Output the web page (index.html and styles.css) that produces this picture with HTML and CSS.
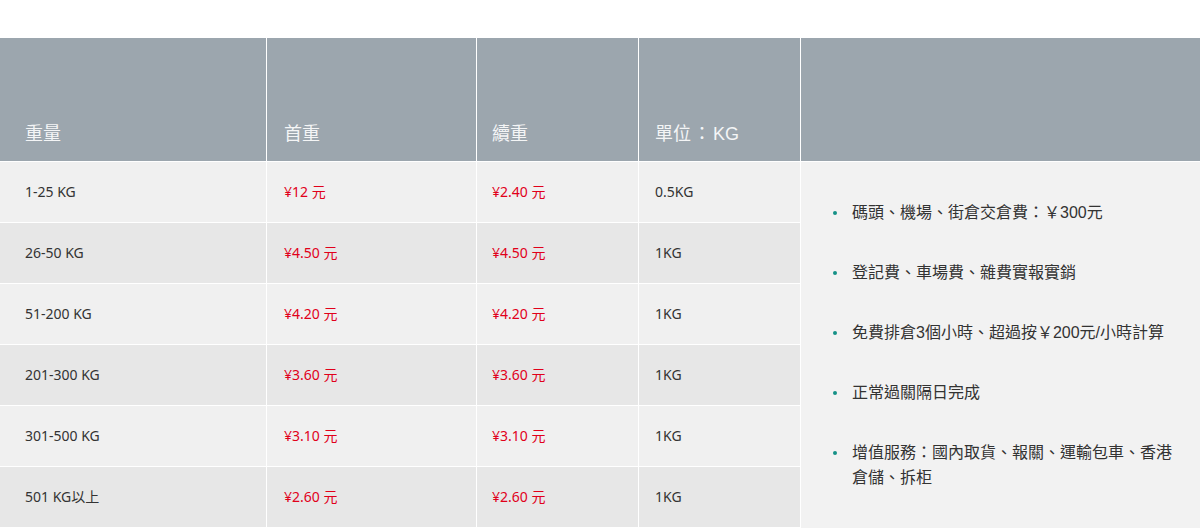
FILE: index.html
```html
<!DOCTYPE html>
<html lang="zh-Hant">
<head>
<meta charset="utf-8">
<title>收費標準</title>
<link rel="stylesheet" href="styles.css">
</head>
<body>
<div class="page">
  <div class="rates">
    <div class="hd c1">重量</div>
    <div class="hd c2">首重</div>
    <div class="hd c3">續重</div>
    <div class="hd c4">單位<span class="colon">：</span>KG</div>
    <div class="hd c5"></div>

    <div class="cell c1 odd">1-25 KG</div>
    <div class="cell c2 odd price">¥12 元</div>
    <div class="cell c3 odd price">¥2.40 元</div>
    <div class="cell c4 odd">0.5KG</div>

    <div class="notes">
      <ul class="note-list">
        <li>碼頭、機場、街倉交倉費：￥300元</li>
        <li>登記費、車場費、雜費實報實銷</li>
        <li>免費排倉3個小時、超過按￥200元/小時計算</li>
        <li>正常過關隔日完成</li>
        <li>增值服務：國內取貨、報關、運輸包車、香港倉儲、拆柜</li>
      </ul>
    </div>

    <div class="cell c1 even">26-50 KG</div>
    <div class="cell c2 even price">¥4.50 元</div>
    <div class="cell c3 even price">¥4.50 元</div>
    <div class="cell c4 even">1KG</div>

    <div class="cell c1 odd">51-200 KG</div>
    <div class="cell c2 odd price">¥4.20 元</div>
    <div class="cell c3 odd price">¥4.20 元</div>
    <div class="cell c4 odd">1KG</div>

    <div class="cell c1 even">201-300 KG</div>
    <div class="cell c2 even price">¥3.60 元</div>
    <div class="cell c3 even price">¥3.60 元</div>
    <div class="cell c4 even">1KG</div>

    <div class="cell c1 odd">301-500 KG</div>
    <div class="cell c2 odd price">¥3.10 元</div>
    <div class="cell c3 odd price">¥3.10 元</div>
    <div class="cell c4 odd">1KG</div>

    <div class="cell c1 even">501 KG以上</div>
    <div class="cell c2 even price">¥2.60 元</div>
    <div class="cell c3 even price">¥2.60 元</div>
    <div class="cell c4 even">1KG</div>
  </div>
</div>
</body>
</html>
```

FILE: styles.css
```css
html, body {
  margin: 0;
  padding: 0;
  background: #ffffff;
}

body {
  font-family: "Noto Sans", "Noto Sans CJK TC", sans-serif;
  color: #333333;
}

.page {
  padding-top: 38px;
  width: 1200px;
}

.rates {
  display: grid;
  grid-template-columns: 266px 209px 161px 161px 399px;
  grid-template-rows: 123px repeat(6, 60px);
  column-gap: 1px;
  row-gap: 1px;
  background: #ffffff;
  padding-bottom: 1px;
}

.hd {
  background: #9ca6ae;
  color: #f4f5f6;
  font-family: "Liberation Sans", "Noto Sans CJK TC", sans-serif;
  font-size: 18px;
  line-height: 24px;
  display: flex;
  align-items: flex-end;
  padding-bottom: 15px;
}

.colon {
  margin: 0 2px 0 2px;
}

.cell {
  display: flex;
  align-items: center;
  font-size: 14px;
  line-height: 20px;
  padding-bottom: 1px;
}

.c1 { padding-left: 25px; }
.c2 { padding-left: 17px; }
.c3 { padding-left: 15px; }
.c4 { padding-left: 16px; }

.odd { background: #f0f0f0; }
.even { background: #e7e7e7; }

.price {
  color: #e1001a;
}

.notes {
  grid-column: 5;
  grid-row: 2 / span 6;
  background: #f2f2f2;
  display: flex;
  align-items: center;
  margin-bottom: -1px;
}

.note-list {
  list-style: none;
  margin: 0;
  padding: 0 22px 0 51px;
  font-family: "Liberation Sans", "Noto Sans CJK TC", sans-serif;
  font-size: 16px;
  line-height: 25px;
  color: #333333;
}

.note-list li {
  position: relative;
  margin-bottom: 35px;
}

.note-list li:last-child {
  margin-bottom: 0;
}

.note-list li::before {
  content: "";
  position: absolute;
  left: -19px;
  top: 11px;
  width: 4px;
  height: 4px;
  border-radius: 50%;
  background: #169187;
}
```
